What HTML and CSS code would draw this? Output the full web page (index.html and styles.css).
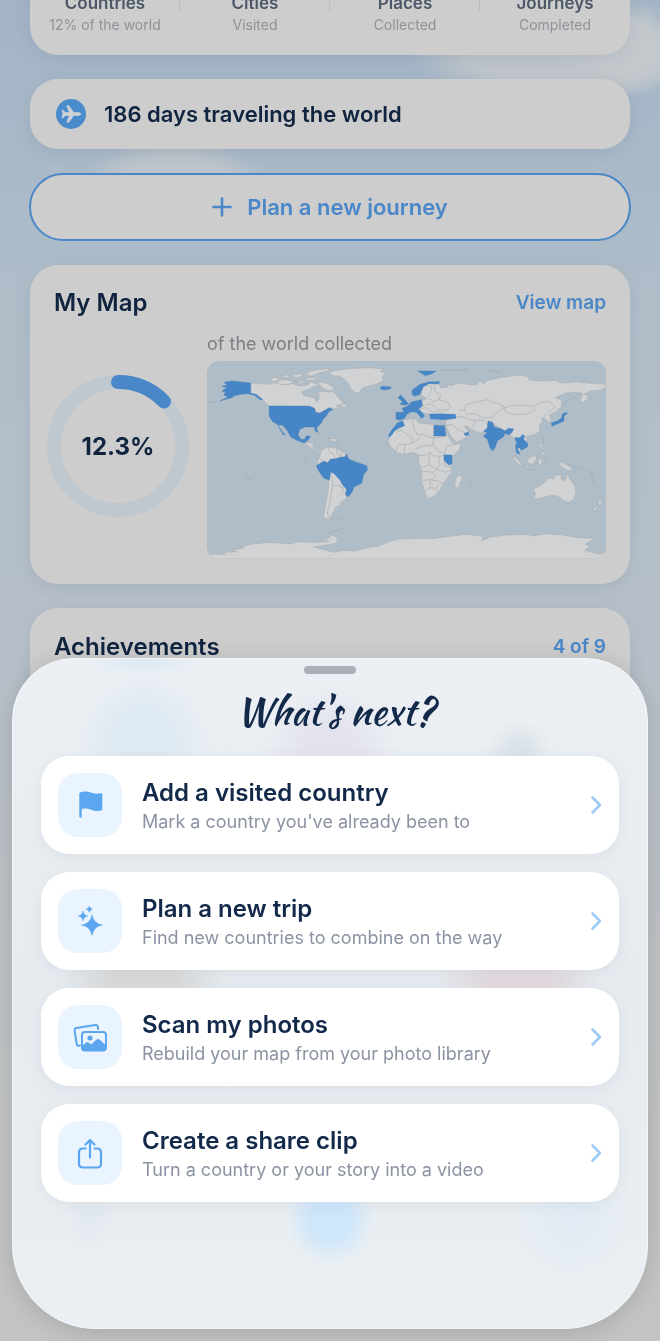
FILE: index.html
```html
<!DOCTYPE html>
<html lang="en">
<head>
<meta charset="utf-8">
<meta name="viewport" content="width=device-width, initial-scale=1">
<title>My travels</title>
<link rel="stylesheet" href="styles.css">
</head>
<body>
<div class="sky"></div>
<main class="feed">
  <section class="card stats">
    <div class="stat"><strong>Countries</strong><span>12% of the world</span></div>
    <div class="stat"><strong>Cities</strong><span>Visited</span></div>
    <div class="stat"><strong>Places</strong><span>Collected</span></div>
    <div class="stat"><strong>Journeys</strong><span>Completed</span></div>
  </section>

  <section class="card days">
    <svg class="plane" viewBox="0 0 30 30" aria-hidden="true">
      <circle cx="15" cy="15" r="15" fill="#4a8bcb"/>
      <path d="M24.700 15c0-1-1.200-1.500-2.700-1.500h-4.300L12.800 6.700h-2l2.600 6.800H9.200L7.300 11.300H5.900L7 15l-1.100 3.700h1.400l1.900-2.200h4.200l-2.600 6.800h2l4.900-6.800H22c1.500 0 2.700-.5 2.700-1.500z" fill="#d0d3d6" stroke="#d0d3d6" stroke-width=".6" stroke-linejoin="round"/>
    </svg>
    <p>186 days traveling the world</p>
  </section>

  <button class="plan" type="button">
    <svg viewBox="0 0 20 20" aria-hidden="true"><path d="M10 1.500v17M1.500 10h17" fill="none" stroke="currentColor" stroke-width="2.600" stroke-linecap="round"/></svg>
    Plan a new journey
  </button>

  <section class="card map-card">
    <header class="head"><h2>My Map</h2><a href="#map">View map</a></header>
    <div class="map-row">
      <div class="ring">
        <svg viewBox="0 0 142 142" aria-hidden="true">
          <circle cx="71" cy="71" r="64" fill="none" stroke="#bfc7cf" stroke-width="14"/>
          <path d="M71 7A64 64 0 0 1 117 26.500" fill="none" stroke="#4987c8" stroke-width="14" stroke-linecap="round"/>
        </svg>
        <strong>12.3%</strong>
      </div>
      <div class="map-col">
        <p>of the world collected</p>
        <svg class="map" viewBox="21 18 1197 594" role="img" aria-label="World map with visited countries in blue">
          <rect x="21" y="18" width="1197" height="594" fill="#aebdc7"/>
          <g class="land">
            <path d="M152 84 205 88 222 83 250 88 275 86 300 92 322 90 334 80 345 86 356 84 350 94 336 97 322 104 306 110 310 120 330 126 344 128 350 142 356 134 358 120 352 112 372 108 384 112 396 108 410 120 422 136 432 145 408 152 420 160 404 162 392 158 378 166 366 172 352 176 346 164 330 155 208 153 196 142 184 130 168 118 152 115Z"/>
            <path d="M206 72 226 66 240 74 222 80ZM228 82 244 74 268 76 284 80 266 88 240 88ZM270 62 300 56 312 62 290 68ZM316 60 330 48 370 42 390 40 384 48 350 56 336 64ZM318 68 350 68 346 76 322 76ZM352 80 378 84 402 98 396 108 378 104 362 94ZM250 64 264 58 270 66 254 70ZM290 78 312 76 306 86ZM420 150 438 146 440 156 424 156Z"/>
            <path d="M388 50 420 44 460 40 510 38 552 42 540 50 556 54 546 66 552 76 532 86 504 94 486 100 478 114 464 112 452 100 444 84 432 72 418 64 396 62Z"/>
            <path d="M318 262 330 262 342 268 338 278 352 288 366 284 362 292 346 290 330 276 316 268ZM350 236 370 240 388 250 372 248ZM388 250 410 252 412 260 390 258Z"/>
            <path d="M366 284 384 276 410 280 424 288 438 298 434 306 404 312 392 318 382 324 372 318 360 330 350 326 358 306Z"/>
            <path d="M391 350 402 352 414 362 424 378 432 392 440 404 438 418 440 430 424 440 420 452 408 456 402 468 396 478 390 490 378 494 370 484 374 462 378 440 384 410 386 380Z"/>
            <path d="M376 490 388 492 400 498 386 498Z"/>
            <path d="M661 92 680 84 702 84 716 88 724 100 744 96 738 88 752 92 776 84 802 88 828 90 840 78 852 86 862 76 890 70 926 64 962 60 990 66 984 74 1024 78 1066 76 1084 84 1130 80 1160 84 1218 88 1218 98 1200 106 1172 108 1152 118 1166 122 1160 136 1144 144 1140 132 1150 118 1130 112 1098 114 1066 128 1086 136 1084 156 1064 172 1048 180 1054 196 1044 204 1038 192 1024 190 1028 200 1018 210 1020 228 1006 238 988 242 976 246 984 254 972 264 956 262 962 280 956 292 950 270 942 250 926 236 908 224 870 200 862 210 866 226 848 234 828 230 812 222 802 214 792 214 806 230 814 234 798 248 770 262 756 248 740 220 736 196 760 190 700 190 690 178 660 172 648 160 668 136 680 130 664 120Z"/>
            <path d="M607 197 634 190 648 192 656 204 680 206 700 208 716 210 738 212 736 228 748 250 760 268 784 266 778 284 756 306 752 326 756 350 740 372 728 388 720 404 708 420 690 430 682 430 674 410 664 376 666 350 656 320 656 300 640 292 612 298 592 294 570 272 564 260 572 236 588 220Z"/>
            <path d="M770 364 784 360 786 370 776 398 766 398 764 384Z"/>
            <path d="M1000 402 1024 390 1038 378 1044 368 1060 372 1066 360 1086 360 1082 370 1096 378 1102 354 1110 372 1124 392 1128 410 1122 434 1106 442 1092 438 1080 428 1060 420 1036 426 1010 432 1002 428 1006 416ZM1106 448 1116 448 1112 456ZM1198 432 1206 442 1198 452 1194 442ZM1178 462 1194 452 1190 464 1180 468Z"/>
            <path d="M936 304 950 310 970 330 968 334 948 322ZM972 334 1000 338 998 344 974 340ZM982 314 996 304 1010 302 1006 322 994 328 984 324ZM1014 314 1028 310 1024 330 1016 330ZM1072 322 1090 324 1112 336 1118 348 1098 344 1086 336ZM1018 262 1026 270 1024 282 1018 274ZM1024 292 1036 290 1036 300 1026 298Z"/>
            <path d="M21 598 76 598 70 592 110 590 96 584 130 580 128 574 162 566 210 562 270 566 300 560 348 562 388 560 362 552 386 550 396 540 412 548 410 564 380 570 340 576 372 584 400 592 430 586 466 588 500 578 540 572 560 562 596 552 650 550 700 550 750 544 796 538 850 544 844 558 870 546 920 540 980 538 1000 542 1040 536 1090 540 1130 548 1184 550 1156 568 1170 574 1154 586 1192 596 1218 596V612H21Z"/>
          </g>
          <g class="borders">
            <path d="M661 92 680 90 696 96 694 110 684 124M702 84 706 110 722 120 716 134 744 142 752 158 738 166 716 164 700 152 688 146 670 152M716 134 700 140 688 130M660 160 680 158 696 170 714 168 736 180M776 164 794 168 796 150 826 142 862 134 880 142 902 148 918 158 932 152 966 150 1000 154 1024 142 1048 140 1066 156 1044 172 1030 188M902 148 918 170 938 178 976 178 1004 168 1000 154M796 176 824 176 852 190 878 186 896 168 918 158M762 188 782 184 800 190 824 196 820 220M736 212 756 208 772 222 800 236M824 196 850 196 864 208"/>
            <path d="M590 232 604 226 636 248 638 264 616 270 596 268M636 194 644 226 652 240 666 238 700 250 702 210M638 264 662 246M664 274 700 270 700 250 736 244M664 274 646 282M596 268 586 294M616 270 612 298M700 270 716 290 734 296 740 272 760 270M656 300 676 302 690 292 700 302 716 304 732 302M690 292 686 330 664 338M686 330 712 342 720 330 716 304M666 348 700 352 712 342 736 352 752 346M668 376 698 374 706 360M690 398 690 378 712 376 726 386M676 408 690 398 708 400 716 386M708 400 710 410M740 304 732 330 752 338"/>
            <path d="M384 276 388 290 402 298 404 312M410 282 412 298 424 306M424 290 424 306M360 312 372 322M391 350 398 378 396 390 420 392 432 400M398 390 390 440 382 470 386 490M420 392 432 408 424 420"/>
          </g>
          <g class="visited">
            <path d="M72 82 96 78 152 84V115L168 118 188 134 180 134 162 120 142 116 122 118 104 122 96 128 72 134 60 138 84 126 72 120 76 112 66 108 80 98 66 94 82 90Z"/>
            <path d="M207 153 328 153 344 160 346 172 360 174 374 166 388 158 398 164 384 172 380 182 370 192 364 204 350 218 354 232 346 228 342 216 316 216 300 222 294 240 304 254 314 252 320 242 332 244 324 256 312 264 290 256 272 246 264 230 248 210 234 210 248 232 256 240 250 240 232 208 218 200 208 184Z"/>
            <path d="M358 326 372 318 382 324 392 312 404 312 424 306 434 306 440 297 446 312 466 320 500 332 503 344 490 360 486 384 462 396 456 412 444 426 436 418 440 402 428 390 420 376 404 358 392 350 388 376 372 370 356 348 349 332Z"/>
            <path d="M540 97 550 94 574 96 570 102 550 105 542 101ZM594 128 602 120 610 128 620 140 626 146 616 150 600 148 608 140 600 134ZM588 172 612 172 606 160 622 154 636 140 648 138 664 134 668 152 656 162 668 174 674 184 664 190 650 172 634 170 620 178 614 190 600 196 588 192ZM636 106 660 88 690 80 720 80 716 86 686 86 670 96 660 118 644 124 636 118ZM654 48 708 48 696 56 676 62ZM688 178 706 176 766 178 768 190 730 194 700 192 692 192ZM608 198 614 212 596 220 584 228 572 244 564 244 576 224 592 204ZM702 211 734 212 738 243 702 243ZM732 299 756 300 756 326 746 330 732 316ZM792 236 806 230 806 240 796 242Z"/>
            <path d="M864 198 878 202 882 216 906 222 914 228 926 220 942 222 934 234 926 240 914 234 912 244 892 258 886 276 878 288 870 278 862 252 850 244 862 232 850 230 862 218ZM944 248 960 248 968 238 974 244 970 252 984 266 982 276 964 286 958 278 952 282 960 298 950 294 946 274 950 264ZM1054 204 1076 196 1086 186 1086 178 1100 172 1102 176 1092 182 1092 198 1078 204 1056 214Z"/>
          </g>
          <path d="M22 144 58 138M86 244l12 2 5 5M132 366l32 12M338 230l40 16M410 254l6 18M522 186l14 4M412 490l18-2M386 534l54-18M724 46l80-2M860 44l40 8M1084 150l60-38M1106 328l50 20M1172 346l10 40M1026 236l4 30M944 298l26 34M976 338l36 8M1034 310l8 24M804 386l12-4M848 482h6M312 318h12" fill="none" stroke="#9eabb5" stroke-width="2"/>
        </svg>
      </div>
    </div>
  </section>

  <section class="card achievements">
    <header class="head"><h2>Achievements</h2><a href="#achievements">4 of 9</a></header>
  </section>
</main>

<div class="sheet" role="dialog" aria-labelledby="sheet-title">
  <span class="handle"></span>
  <h1 id="sheet-title">What's next?</h1>
  <nav class="actions">
    <a class="action" href="#add">
      <span class="tile"><svg viewBox="0 0 64 64" aria-hidden="true"><path d="M21.300 43.500V21Q21.300 19.800 22.500 19.300C27 18 30 18.600 33.500 19.700 37 20.900 39.500 21 42.500 20.300Q44.300 19.900 44.300 21.500V36.200Q44.300 37.200 43.300 37.500C39.500 38.500 36.500 37.800 33 36.700 29.500 35.500 27 35.300 23.700 36V43.500A1.200 1.200 0 0 1 21.300 43.500Z" fill="#5ba6ee"/></svg></span>
      <span class="text"><strong>Add a visited country</strong><span>Mark a country you've already been to</span></span>
      <svg class="chevron" viewBox="0 0 10 18" aria-hidden="true"><path d="M1.500 1.500 9 9 1.500 16.500"/></svg>
    </a>
    <a class="action" href="#trip">
      <span class="tile"><svg viewBox="0 0 64 64" aria-hidden="true"><path d="M34 25.500Q35.500 34.500 44.500 36 35.500 37.500 34 46.500 32.500 37.500 23.500 36 32.500 34.500 34 25.500ZM25 22Q25.700 26.300 30 27 25.700 27.700 25 32 24.300 27.700 20 27 24.300 26.300 25 22ZM31.300 17Q31.800 19.700 34.500 20.200 31.800 20.700 31.300 23.400 30.800 20.700 28.100 20.200 30.800 19.700 31.300 17Z" fill="#5ba6ee" stroke="#5ba6ee" stroke-width=".4" stroke-linejoin="round"/></svg></span>
      <span class="text"><strong>Plan a new trip</strong><span>Find new countries to combine on the way</span></span>
      <svg class="chevron" viewBox="0 0 10 18" aria-hidden="true"><path d="M1.500 1.500 9 9 1.500 16.500"/></svg>
    </a>
    <a class="action" href="#photos">
      <span class="tile"><svg viewBox="0 0 64 64" aria-hidden="true"><g fill="none" stroke="#5ba6ee" stroke-width="2" stroke-linecap="round" stroke-linejoin="round"><path d="M22 40.500 20.500 40.700Q19 40.700 18.700 39L16.600 25.500Q16.400 23.500 18.300 23.100L37.500 20.100Q39.500 19.900 39.800 21.700L40.200 24"/><rect x="24" y="27" width="24" height="18.500" rx="3"/></g><path d="M24 41 28 37.500Q29.200 36.700 30.400 37.500L33 39.500 38.500 34.600Q40 33.500 41.500 34.600L48 40.500V43Q48 45.500 45.500 45.500H26.500Q24 45.500 24 43Z" fill="#5ba6ee"/><circle cx="32" cy="33" r="2.600" fill="#5ba6ee"/></svg></span>
      <span class="text"><strong>Scan my photos</strong><span>Rebuild your map from your photo library</span></span>
      <svg class="chevron" viewBox="0 0 10 18" aria-hidden="true"><path d="M1.500 1.500 9 9 1.500 16.500"/></svg>
    </a>
    <a class="action" href="#share">
      <span class="tile"><svg viewBox="0 0 64 64" aria-hidden="true"><path d="M27.500 27.500H25Q21 27.500 21 31.500V42.500Q21 46.500 25 46.500H39Q43 46.500 43 42.500V31.500Q43 27.500 39 27.500H36.500M32 36.500V19.500M27.500 23.500 32 19 36.500 23.500" fill="none" stroke="#5ba6ee" stroke-width="2.200" stroke-linecap="round" stroke-linejoin="round"/></svg></span>
      <span class="text"><strong>Create a share clip</strong><span>Turn a country or your story into a video</span></span>
      <svg class="chevron" viewBox="0 0 10 18" aria-hidden="true"><path d="M1.500 1.500 9 9 1.500 16.500"/></svg>
    </a>
  </nav>
</div>
</body>
</html>
```
FILE: styles.css
```css
* { box-sizing: border-box; }
html { height: 100%; overflow: hidden; }
body {
  margin: 0;
  height: 100%;
  overflow: hidden;
  font-family: Inter, Roboto, sans-serif;
  color: #10233f;
}
h1, h2, p { margin: 0; }
a { text-decoration: none; }

.sky {
  position: fixed;
  inset: 0;
  z-index: -1;
  background:
    radial-gradient(ellipse 60px 50px at 625px 48px, #c3c8cd 50%, transparent 100%),
    radial-gradient(ellipse 150px 46px at 560px 56px, #bfc5cb 60%, transparent 100%),
    radial-gradient(ellipse 90px 34px at 175px 176px, #bdc4cb 55%, transparent 100%),
    linear-gradient(#a2b4c6 0, #a9b9c8 160px, #afbdc9 300px, #b6bfc9 640px, #c0c3c5 1000px, #c4c4c4 100%);
}

.feed {
  display: flex;
  flex-direction: column;
  gap: 24px;
  padding: 0 30px;
}
.card {
  background: #cdcdcd;
  border-radius: 28px;
  box-shadow: 0 4px 16px rgba(60, 80, 100, .1);
}

.stats {
  display: grid;
  grid-template-columns: repeat(4, 1fr);
  margin-top: -42px;
  padding: 34px 0 19px;
}
.stat {
  display: flex;
  flex-direction: column;
  align-items: center;
  text-align: center;
  font-size: 14px;
  line-height: 22px;
  color: #8e9399;
  background: linear-gradient(#bbbfc3, #bbbfc3) right top / 1px 20px no-repeat;
}
.stat:last-child { background: none; }
.stat strong { font-size: 17px; font-weight: 600; color: #4d5868; }

.days {
  display: flex;
  align-items: center;
  gap: 18px;
  padding: 20px 26px;
  font-size: 22px;
  font-weight: 600;
  line-height: 30px;
}
.plane { width: 30px; height: 30px; }

.plan {
  display: flex;
  align-items: center;
  justify-content: center;
  gap: 15px;
  margin: 0 -1px;
  padding: 17px;
  border: 2px solid #4987c8;
  border-radius: 34px;
  background: #cdcdcd;
  color: #4987c8;
  font: 600 22px/30px Inter, Roboto, sans-serif;
}
.plan svg { width: 20px; height: 20px; }

.head {
  display: flex;
  align-items: center;
  justify-content: space-between;
  line-height: 30px;
}
.head h2 { font-size: 24px; font-weight: 600; }
.head a { font-size: 19px; font-weight: 600; color: #4987c8; }
.map-card { padding: 23px 24px 25px; }
.map-row {
  display: flex;
  align-items: center;
  gap: 18px;
  margin: 15px 0 0 -7px;
}
.ring {
  display: grid;
  place-items: center;
  flex: none;
  width: 142px;
}
.ring > * { grid-area: 1 / 1; }
.ring svg { display: block; width: 100%; }
.ring strong { font-size: 24px; font-weight: 700; }
.map-col { flex: 1; }
.map-col p {
  padding-bottom: 6px;
  font-size: 18px;
  line-height: 22px;
  color: #7b7f84;
}
.map { display: block; width: 100%; border-radius: 12px; }
.land { fill: #d1d2d3; stroke: #adb1b5; stroke-width: 2; stroke-linejoin: round; }
.borders { fill: none; stroke: #a9adb1; stroke-width: 2; stroke-linejoin: round; }
.visited { fill: #4686c6; stroke: #3f7ab8; stroke-width: 1; stroke-linejoin: round; }
.achievements { padding: 24px; height: 300px; }

.sheet {
  position: fixed;
  left: 12px;
  right: 12px;
  bottom: 12px;
  display: flex;
  flex-direction: column;
  align-items: center;
  padding: 7px 28px 126px;
  border: 1px solid #f4f7f9;
  border-radius: 62px 62px 84px 84px;
  box-shadow: 0 4px 24px rgba(0, 0, 0, .14);
  background:
    radial-gradient(circle 44px at 50% 560px, #cfe7fb 45%, transparent 100%),
    radial-gradient(circle 30px at 76px 560px, #e1e8ee, transparent),
    radial-gradient(circle 60px at 558px 560px, #e1ebf4, transparent),
    radial-gradient(circle 68px at 131px 80px, #dee9f2 40%, transparent 100%),
    radial-gradient(ellipse 66px 20px at 131px 0, #dce9f3, transparent),
    radial-gradient(circle 68px at 50% 92px, #e3e3ed 35%, transparent 100%),
    radial-gradient(circle 34px at 506px 94px, #dce4e9 30%, transparent 100%),
    radial-gradient(ellipse 80px 40px at 131px 320px, #d9dadb 40%, transparent 100%),
    radial-gradient(ellipse 80px 40px at 506px 320px, #e3dae0 40%, transparent 100%),
    linear-gradient(#ecf0f4, #e6ebf0 50%, #eaeff3);
}
.handle { width: 52px; height: 8px; border-radius: 4px; background: #abafba; }
.sheet h1 {
  padding: 14px 0 20px 10px;
  font: 400 38px/48px "Kaushan Script", "Liberation Serif", serif;
  color: #12294a;
}
.actions {
  display: flex;
  flex-direction: column;
  gap: 18px;
  width: 100%;
}
.action {
  display: flex;
  align-items: center;
  gap: 20px;
  padding: 17px 18px 17px 17px;
  border-radius: 28px;
  background: #fff;
  box-shadow: 0 4px 16px rgba(60, 80, 100, .07);
  color: #12294a;
}
.tile { flex: none; width: 64px; height: 64px; border-radius: 20px; background: #eaf4fe; }
.tile svg { display: block; width: 64px; height: 64px; }
.text { display: flex; flex: 1; flex-direction: column; padding-top: 3px; }
.text strong { font-size: 24px; font-weight: 600; line-height: 30px; }
.text span { font-size: 18px; line-height: 27px; color: #8b93a3; }
.chevron { width: 10px; height: 18px; fill: none; stroke: #9cc9f5; stroke-width: 2.6; stroke-linecap: round; stroke-linejoin: round; }
```
